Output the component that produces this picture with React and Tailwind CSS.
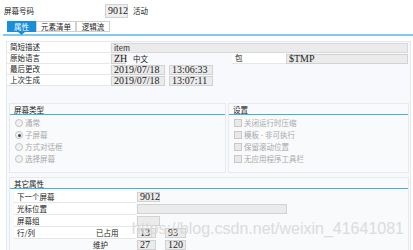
const cjk = { fontFamily: '"Noto Sans CJK SC", "Noto Sans", sans-serif' }
const serif = { fontFamily: '"Liberation Serif", "Noto Sans CJK SC", serif' }

function Field({ w, children, className = '' }) {
  return (
    <div
      className={`h-[10px] flex items-center px-[2px] bg-[#ebebeb] border border-[#d2d2d2] text-[10px] leading-none text-[#222] ${w} ${className}`}
      style={serif}
    >
      {children}
    </div>
  )
}

function Label({ w, children, className = '' }) {
  return (
    <div className={`h-full flex items-center bg-white border-b border-[#e4e6e8] pl-[3px] ${w} ${className}`}>
      {children}
    </div>
  )
}

function GroupHead({ title }) {
  return (
    <div className="h-[11px] flex items-end pl-[4px] pb-[1px] border-b border-[#3fb1ea] text-[#222]">
      {title}
    </div>
  )
}

function Radio({ label, checked }) {
  return (
    <div className="h-[12px] flex items-center gap-[2px] text-[#a9a9a9]">
      <span className="w-[8px] h-[8px] rounded-full border border-[#c4c4c4] bg-[#f2f2f2] flex items-center justify-center">
        {checked && <span className="w-[3px] h-[3px] rounded-full bg-[#444]" />}
      </span>
      {label}
    </div>
  )
}

function Check({ label }) {
  return (
    <div className="h-[12px] flex items-center gap-[2px] text-[#a9a9a9]">
      <span className="w-[8px] h-[8px] border border-[#c8c8c8] bg-[#e9e9e9]" />
      {label}
    </div>
  )
}

export default function App() {
  return (
    <div className="relative w-[413px] h-[250px] overflow-hidden bg-white text-[7.5px] leading-none text-[#222]" style={cjk}>
      {/* header */}
      <div className="flex items-center h-[14px] mt-[4px] pl-[4px]">
        <div className="w-[101px]">屏幕号码</div>
        <Field w="w-[23px]" className="h-[14px] text-[9.5px] bg-[#efefef]">9012</Field>
        <div className="ml-[5px]">活动</div>
      </div>

      {/* tabs */}
      <div className="relative flex mt-[3px] ml-[7px] h-[11px]">
        <div className="w-[29px] flex items-center justify-center bg-[#1a8ed8] text-white">属性</div>
        <div className="w-[40px] flex items-center justify-center border border-[#d0d0d0] bg-white">元素清单</div>
        <div className="w-[34px] flex items-center justify-center border border-[#d0d0d0] bg-white">逻辑流</div>
        <svg className="absolute left-[11px] top-[11px]" width="7" height="3" viewBox="0 0 7 3">
          <path d="M0 0 L7 0 L3.5 3 Z" fill="#1a8ed8" />
        </svg>
      </div>
      <div className="mt-[2px] h-[2px] ml-[3px] bg-[#7fcbf0]" />

      {/* main panel */}
      <div className="mt-[5px] ml-[6px] mr-[2px] h-[220px] border-l border-r border-t border-[#e4e9ef] bg-[#f7f9fc]">
        <div className="flex flex-col">
          <div className="flex items-center h-[11px]">
            <Label w="w-[103px]">简短描述</Label>
            <div className="flex-1 h-full flex items-center pl-[1px] pr-[2px]">
              <div className="flex-1 h-[10px] flex items-center px-[2px] bg-[#ebebeb] border border-[#d8d8d8]">item</div>
            </div>
          </div>
          <div className="flex items-center h-[11px]">
            <Label w="w-[103px]">原始语言</Label>
            <Field w="w-[15px]" className="ml-[1px]">ZH</Field>
            <div className="ml-[7px] w-[99px]">中文</div>
            <Label w="w-[54px]">包</Label>
            <Field w="w-[122px]">$TMP</Field>
          </div>
          <div className="flex items-center h-[11px]">
            <Label w="w-[103px]">最后更改</Label>
            <Field w="w-[54px]" className="ml-[1px]">2019/07/18</Field>
            <Field w="w-[44px]" className="ml-[4px]">13:06:33</Field>
          </div>
          <div className="flex items-center h-[11px]">
            <Label w="w-[103px]">上次生成</Label>
            <Field w="w-[54px]" className="ml-[1px]">2019/07/18</Field>
            <Field w="w-[44px]" className="ml-[4px]">13:07:11</Field>
          </div>
        </div>

        {/* screen type + settings */}
        <div className="flex gap-[2px] mt-[17px] ml-[2px] mr-[1px] h-[70px]">
          <div className="w-[217px] border border-[#e6eaee] bg-[#f8fafc]">
            <GroupHead title="屏幕类型" />
            <div className="pl-[5px] pt-[2px]">
              <Radio label="通常" />
              <Radio label="子屏幕" checked />
              <Radio label="方式对话框" />
              <Radio label="选择屏幕" />
            </div>
          </div>
          <div className="flex-1 border border-[#e6eaee] bg-[#f8fafc]">
            <GroupHead title="设置" />
            <div className="pl-[5px] pt-[2px]">
              <Check label="关闭运行时压缩" />
              <Check label="模板 - 非可执行" />
              <Check label="保留滚动位置" />
              <Check label="无应用程序工具栏" />
            </div>
          </div>
        </div>

        {/* other attributes */}
        <div className="mt-[4px] ml-[2px] mr-[1px] h-[74px] border border-[#e6eaee] bg-[#f8fafc]">
          <GroupHead title="其它属性" />
          <div className="pl-[4px] pt-[2px] flex flex-col">
            <div className="flex items-center h-[12px]">
              <Label w="w-[122px]">下一个屏幕</Label>
              <Field w="w-[23px]" className="ml-[1px]">9012</Field>
            </div>
            <div className="flex items-center h-[12px]">
              <Label w="w-[122px]">光标位置</Label>
              <Field w="w-[150px]" className="ml-[1px]" />
            </div>
            <div className="flex items-center h-[12px]">
              <Label w="w-[122px]">屏幕组</Label>
              <Field w="w-[23px]" className="ml-[1px]" />
            </div>
            <div className="flex items-center h-[12px]">
              <Label w="w-[79px]">行/列</Label>
              <Label w="w-[43px]" className="pl-0">已占用</Label>
              <Field w="w-[19px]" className="ml-[1px]">13</Field>
              <Field w="w-[21px]" className="ml-[9px]">93</Field>
            </div>
            <div className="flex items-center h-[12px]">
              <div className="w-[79px]" />
              <div className="w-[43px]">维护</div>
              <Field w="w-[19px]" className="ml-[1px]">27</Field>
              <Field w="w-[21px]" className="ml-[9px]">120</Field>
            </div>
          </div>
        </div>
      </div>

      {/* watermark */}
      <div
        className="absolute right-[9px] top-[221px] text-[16px] leading-none text-[#d9d9d9] opacity-90 pointer-events-none"
        style={{ fontFamily: '"Liberation Sans", Arial, sans-serif' }}
      >
        https://blog.csdn.net/weixin_41641081
      </div>
    </div>
  )
}
